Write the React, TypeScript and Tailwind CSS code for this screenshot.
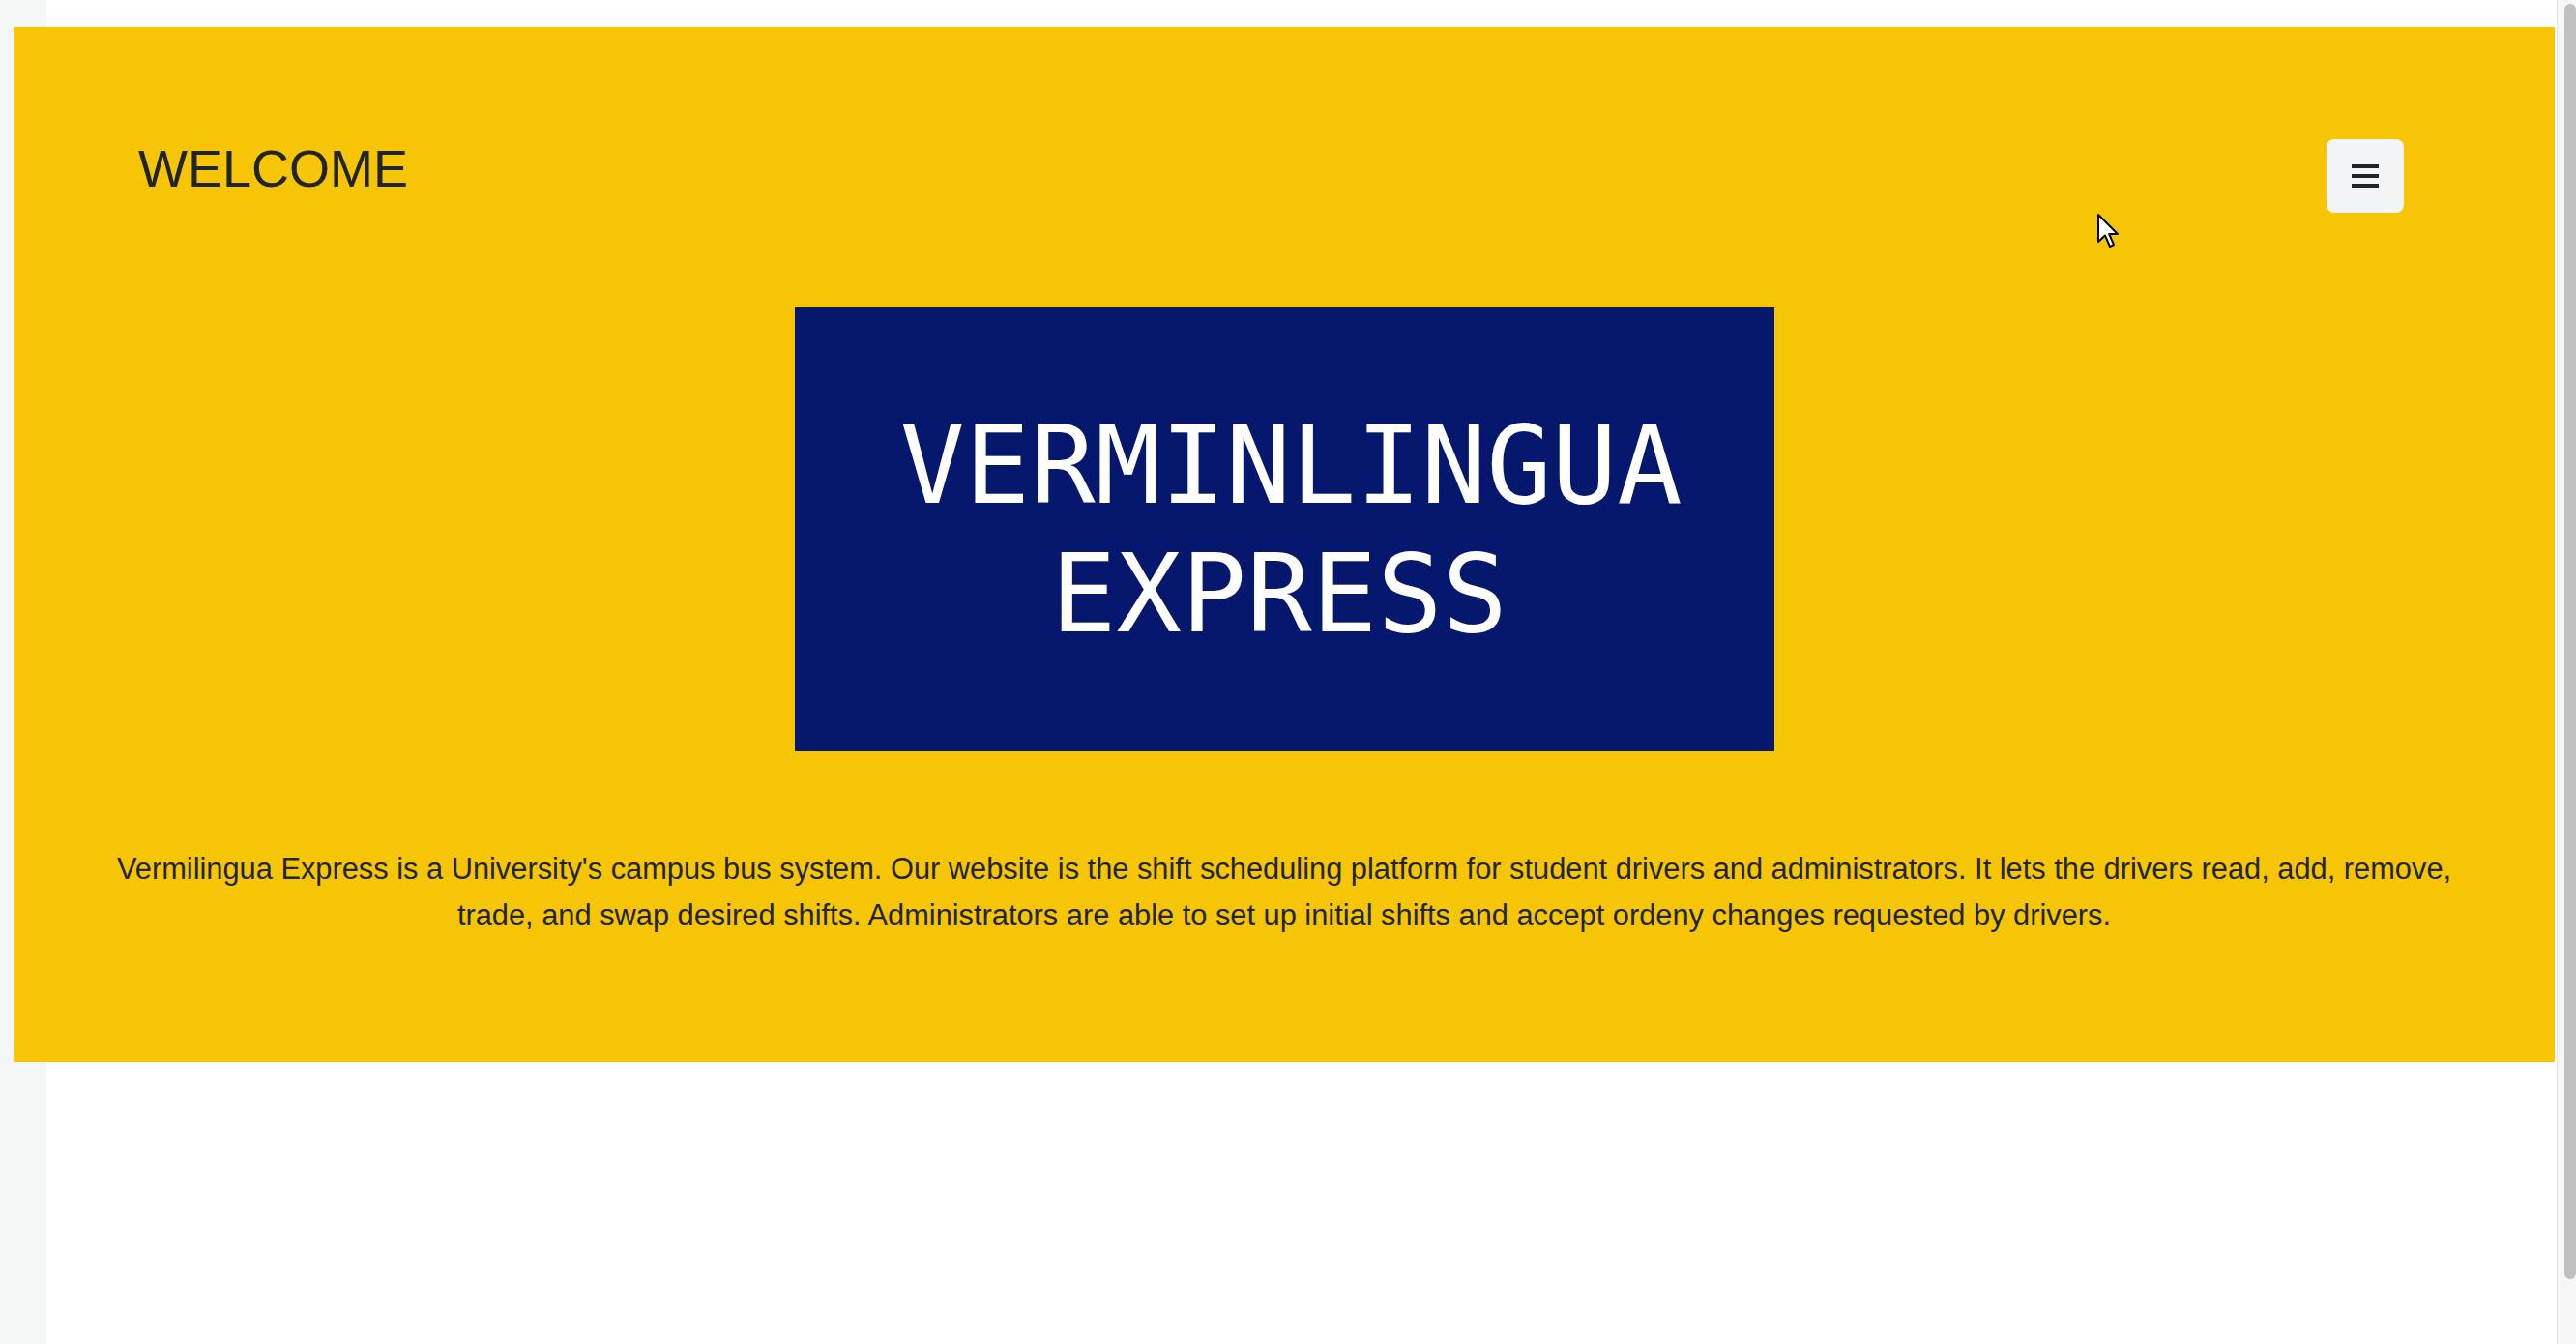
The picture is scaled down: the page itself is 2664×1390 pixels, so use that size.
const Cursor = () => (
  <svg
    className="absolute left-[2168px] top-[220px]"
    width="24"
    height="38"
    viewBox="0 0 12 19"
  >
    <path
      d="M1 1 L1 15 L4.5 11.8 L7 17.5 L9 16.6 L6.6 11 L11 11 Z"
      fill="#ffffff"
      stroke="#000000"
      strokeWidth="1"
      strokeLinejoin="round"
    />
  </svg>
);

const Header = () => (
  <div className="flex items-start justify-between pt-[116px] pl-[129px] pr-[156px]">
    <h2 className="mt-[3px] text-[54px] leading-none text-[#212529] font-['Liberation_Sans',Arial,sans-serif]">
      WELCOME
    </h2>
    <button className="flex h-[76px] w-[80px] items-center justify-center rounded-[8px] bg-[#f3f4f5]">
      <svg width="28" height="24" viewBox="0 0 28 24">
        <rect x="0" y="0" width="28" height="4" fill="#212529" />
        <rect x="0" y="10" width="28" height="4" fill="#212529" />
        <rect x="0" y="20" width="28" height="4" fill="#212529" />
      </svg>
    </button>
  </div>
);

const Banner = () => (
  <div className="mx-auto mt-[98px] flex h-[459px] w-[1013px] items-center justify-center bg-[#06186d]">
    <h1 className="text-center text-[112px] leading-[133px] text-white font-['DejaVu_Sans_Mono',monospace]">
      <span className="block pl-[14px]">VERMINLINGUA</span>
      <span className="block pr-[10px]">EXPRESS</span>
    </h1>
  </div>
);

export default function App() {
  return (
    <div className="relative flex h-[1390px] bg-white">
      <main className="flex-1 bg-[linear-gradient(to_right,#f5f6f6_48px,#ffffff_48px)] pt-[28px] pl-[14px] pr-[2px]">
        <section className="h-[1070px] bg-[#f6c505]">
          <Header />
          <Banner />
          <p className="mt-[98px] px-[86px] text-center text-[30.8px] leading-[48px] text-[#212529] font-['Liberation_Sans',Arial,sans-serif]">
            Vermilingua Express is a University's campus bus system. Our website is the shift scheduling platform for
            student drivers and administrators. It lets the drivers read, add, remove, trade, and swap desired shifts.
            Administrators are able to set up initial shifts and accept ordeny changes requested by drivers.
          </p>
        </section>
      </main>
      <div className="w-[20px] border-l border-[#e3e3e3] bg-[#f6f6f6] pt-[4px] pl-[7px]">
        <div className="h-[1319px] w-[12px] rounded-full bg-[#c1c1c1]" />
      </div>
      <Cursor />
    </div>
  );
}
